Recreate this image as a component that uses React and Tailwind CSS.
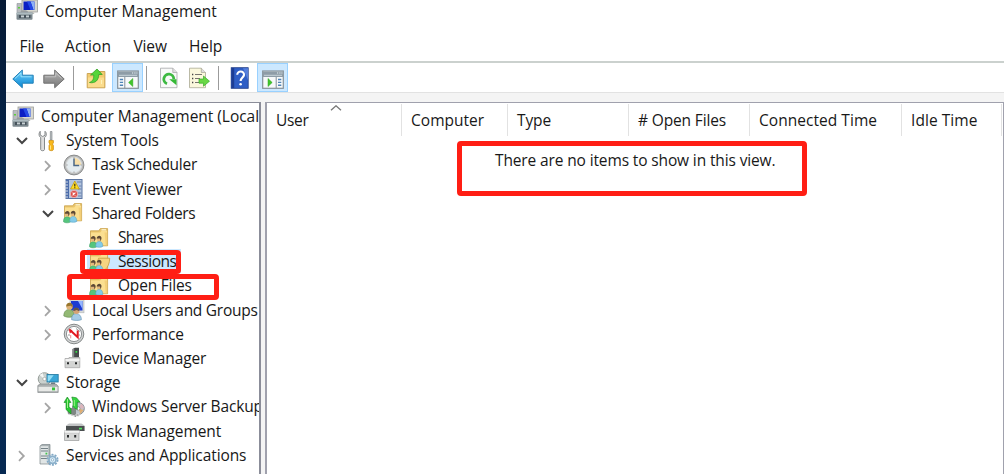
import React from "react";

const Svg = ({ children, className = "h-[22px] w-[22px]" }) => (
  <svg viewBox="0 0 22 22" className={`block shrink-0 ${className}`}>{children}</svg>
);

const ComputerIcon = () => (
  <Svg>
    <path d="M1 4.5h4.5v9H1z" fill="#b9bcc0" stroke="#8d9297" strokeWidth=".6" />
    <rect x="2" y="8" width="2" height="1.5" fill="#5bd13b" />
    <rect x="6" y="1" width="15.5" height="12" fill="#d9d9d0" stroke="#9b9c99" strokeWidth=".8" />
    <rect x="7.5" y="2.5" width="11" height="8.5" fill="#0b1fc4" />
    <path d="M14.5 2.5h4V11h-1z" fill="#8fb2f5" />
    <path d="M11 2.5h3.5L17.5 11h-3z" fill="#2448e6" />
    <path d="M12 13h5l1.5 2h-6z" fill="#b7b9b6" />
    <path d="M4.5 13c0-2.5 7.5-2.5 7.5 0v2H4.5z" fill="#969b9e" />
    <rect x=".5" y="13.5" width="16" height="7.3" rx="1" fill="#7b878d" />
    <rect x=".5" y="13.5" width="16" height="2" fill="#aebbc0" />
    <path d="M3 16h2v3H3zM8 16h2v3H8zM13 16h1.5v3H13z" fill="#46525b" />
    <path d="M5 17.3h3M10 17.3h3" stroke="#dce3e6" />
  </Svg>
);

const ToolsIcon = () => (
  <Svg>
    <path d="M3.2 1.3C1.7 3 1.5 6 3.7 7.6v12c0 1.5 3.8 1.5 3.8 0v-12C10 6 9.8 2.7 8 1.3v4L5.7 6.5 3.2 5z" fill="#dedede" stroke="#85898b" strokeWidth="1" />
    <path d="M13.3 1.5h1.7V10h-1.7z" fill="#bcc0c3" stroke="#777c80" strokeWidth=".6" />
    <path d="M12 10.5h4.4v2.5l-1 1 1 1.5v4c0 1.6-4.4 1.6-4.4 0v-4l1-1.5-1-1z" fill="#f9b91c" stroke="#c88a0c" strokeWidth=".7" />
    <path d="M13.5 15.5v4" stroke="#ffe487" />
  </Svg>
);

const ClockIcon = () => (
  <Svg>
    <circle cx="11" cy="11" r="9.9" fill="#b9bbba" stroke="#88898a" strokeWidth="1" />
    <circle cx="11" cy="11" r="7.8" fill="#e4ecf0" stroke="#d9dadb" />
    <path d="M11 11V3.8A7.2 7.2 0 0 1 18.2 11z" fill="#f8dfa8" />
    <path d="M11 4.5V11.5h5.2" fill="none" stroke="#4a6787" strokeWidth="1.5" />
    <path d="M11 3.4v1M11 17.6v1M3.5 11h1M17.6 11h1" stroke="#888" />
  </Svg>
);

const EventIcon = () => (
  <Svg>
    <rect x="3" y="1.5" width="16" height="19" fill="#b4c5de" stroke="#5b75a2" />
    <rect x="3" y="2" width="3" height="18" fill="#4b6cab" />
    <path d="M1.5 4h3.5M1.5 7h3.5M1.5 10h3.5M1.5 13h3.5M1.5 16h3.5M1.5 19h3.5" stroke="#d5dbe4" />
    <path d="M14 4h4.5M16 8h2.5M15 11h3.5M15 15h3.5M15 18h3.5" stroke="#6881ae" />
    <path d="m11.8 3 4.5 8H7.5z" fill="#ffdd21" stroke="#bf9510" strokeWidth=".7" />
    <path d="M11.8 5.8v2.7M11.8 9.2v1" stroke="#372f12" strokeWidth="1.2" />
    <circle cx="11" cy="16" r="3.7" fill="#dc504b" stroke="#f3c8c8" strokeWidth=".7" />
    <path d="m9.6 14.6 2.8 2.8m0-2.8-2.8 2.8" stroke="#fff" strokeWidth="1.1" />
  </Svg>
);

const FolderIcon = ({ open = false }) => (
  <Svg>
    <path d="M1.5 3.8h8.3l1.5-2.2h7.3v17.2H1.5z" fill="#eac66c" stroke="#c9a14d" strokeWidth=".8" />
    <path d="M2 5.5h9.2l1.5-1.8h5.4v14.5H2z" fill="#fbdf90" />
    {open
      ? <path d="M9.5 7.2h11.2c0 5-2 9.5-4.5 11.3H7z" fill="#f6d481" stroke="#c59a41" strokeWidth=".8" />
      : <path d="M15.5 5.5h2.6v12.7h-1.3z" fill="#f3cf78" />}
    <path d="M12.5 2.8h4.5" stroke="#fff8d9" strokeWidth="1.2" />
    <path d="M.5 19.8c0-3.8 1.6-5 3.6-5s3.8 1.2 3.8 5c-2 1.4-5.7 1.4-7.4 0z" fill="#55c57c" stroke="#389c61" strokeWidth=".5" />
    <path d="M6.7 19.4c0-3.8 1.6-5 3.4-5 2.1 0 3.7 1.3 3.7 5-1.8 1.2-5.2 1.2-7.1 0z" fill="#83cbe9" stroke="#4d9abf" strokeWidth=".5" />
    <circle cx="4.1" cy="12.3" r="2.3" fill="#e3b77b" />
    <circle cx="10" cy="12" r="2.3" fill="#e3b77b" />
    <path d="M1.8 11.7c.2-3.7 5.1-3.5 4.8-.2-.1 1.3-1.1 2.9-1.1 2.9l-.4-2.6zM7.7 11.4c.2-3.7 5.1-3.5 4.8-.2-.1 1.3-1.1 2.9-1.1 2.9l-.4-2.6z" fill="#5d4935" />
  </Svg>
);

const UsersIcon = () => (
  <Svg>
    <rect x="7" y=".8" width="14" height="13" fill="#d7dad9" stroke="#b1b5b6" strokeWidth=".6" />
    <rect x="8" y="2" width="11.5" height="9.5" fill="#1d3bd2" />
    <path d="M15 2h4.5v8z" fill="#93b5ff" />
    <path d="M.8 17c0-5 2.8-6.5 5.3-6.5s5.4 2 5.4 6.5c-3 1.7-7.8 1.7-10.7 0z" fill="#93b974" stroke="#658950" strokeWidth=".6" />
    <circle cx="6.5" cy="7.5" r="3.2" fill="#ddb177" />
    <path d="M3.2 7.5c0-6 7.5-4.3 6.3.7L7.7 6.7z" fill="#98762e" />
    <path d="M8.6 20.7c0-5 2.3-6 4.8-6s5 2 5 6c-2.5 1-7 1-9.8 0z" fill="#a5cbe6" stroke="#5d8fb4" strokeWidth=".6" />
    <circle cx="13.4" cy="12" r="3" fill="#d6a375" />
    <path d="M10.3 12.3c0-5.6 6.6-4.2 6 0l-2.6-1.3z" fill="#625348" />
  </Svg>
);

const PerfIcon = () => (
  <Svg>
    <circle cx="11" cy="11" r="9.8" fill="#d2d4d4" stroke="#858989" strokeWidth="1" />
    <circle cx="11" cy="11" r="7.6" fill="#fff" stroke="#8e9293" />
    <path d="M5.5 8 8 5.5M13 5.5l4 3M5 12h2M15.5 12H17" stroke="#999" />
    <path d="m7 7 7.7 7.2V7.5" fill="none" stroke="#e31920" strokeWidth="2" />
    <path d="m6 5.8 1 4.4 2.2-2.4zM7.7 12v3.3" fill="#e31920" stroke="#e31920" strokeWidth=".5" />
  </Svg>
);

const DeviceIcon = () => (
  <Svg>
    <path d="M9.5 2 12 .8h4v9.7H9.5z" fill="#45494a" />
    <path d="M9.7 2h1.5v8H9.7z" fill="#85898a" />
    <rect x="12.5" y="4" width="1.7" height="1.7" fill="#35e446" />
    <path d="M2 11.5h4v-1h10.8v10.2H2z" fill="#d3d4d3" stroke="#a0a1a0" strokeWidth=".7" />
    <path d="M2.5 12h14v2h-14z" fill="#f2f2f2" />
    <path d="M4 15.2h2v2H4zM12 15.2h2v2h-2z" fill="#27292a" />
  </Svg>
);

const StorageIcon = () => (
  <Svg>
    <circle cx="7.5" cy="7" r="6.3" fill="#cbd1ce" stroke="#979e9a" />
    <path d="m7.5 7-5-4 3-2z" fill="#f4f6f5" />
    <circle cx="7.5" cy="7" r="1.7" fill="#fff" stroke="#929794" strokeWidth=".6" />
    <rect x="10" y="2.5" width="11.2" height="7.5" fill="#39a6d6" stroke="#20759d" strokeWidth=".8" />
    <path d="M10.7 3.2h6L12 9.3h-1.3z" fill="#93ddf5" />
    <path d="M14 10.5h4v1.5h-4z" fill="#657a82" />
    <path d="M.8 13.5 3 12h16l2.2 2v6.5H.8z" fill="#aaafaf" stroke="#7d8384" strokeWidth=".6" />
    <path d="M1.5 14.8h19v4.4h-19z" fill="#e8e9e7" />
    <rect x="15" y="15.5" width="3" height="2.8" fill="#36c33b" />
  </Svg>
);

const BackupIcon = () => (
  <Svg>
    <circle cx="15.3" cy="12.5" r="6" fill="#bdc6cc" stroke="#858b91" />
    <path d="m15.3 12.5 3-5a6 6 0 0 1 2.5 5z" fill="#dcb6bd" />
    <path d="m15.3 12.5 5.2 1.5-3 4z" fill="#dfae72" />
    <circle cx="15.3" cy="12.5" r="1.7" fill="#fff" stroke="#777" strokeWidth=".6" />
    <path d="M4 12h9v9l-8-3z" fill="#7f8784" />
    <path d="M5.5 18 12 20M13 18h3v2h-3z" stroke="#ddd" fill="#777" />
    <path d="M4.3 1 1 6.5h2v7l5 4.5V13L6 10.5v-4h2z" fill="#27c833" stroke="#188620" strokeWidth=".6" />
    <path d="M8.8 1 13.5 1.8 17 6h-2.7v7.5L10 11V5.2z" fill="#35d540" stroke="#188620" strokeWidth=".6" />
    <path d="M4.5 3v9M11.3 4v6" stroke="#9bf187" />
  </Svg>
);

const DiskIcon = () => (
  <Svg>
    <path d="m3 5.5 3-2h12.5l3 2V11H3z" fill="#c2c4c5" />
    <path d="M3 6h18.5v5H3z" fill="#4b4f50" />
    <rect x="16" y="7.8" width="3" height="1.6" fill="#4ee85f" />
    <path d="M1.5 12.5H16V20.5H1.5z" fill="#d7d8d7" stroke="#999b9b" strokeWidth=".7" />
    <path d="M1.5 10.5h15v2.7h-15z" fill="#f3f4f3" stroke="#aaa" strokeWidth=".4" />
    <path d="M4 15h2v2.5H4zM11.2 15h2v2.5h-2z" fill="#292b2c" />
  </Svg>
);

const ServicesIcon = () => (
  <Svg>
    <path d="m3 2 2-1.5h8V20H3z" fill="#a9b1b3" stroke="#7d878b" strokeWidth=".7" />
    <path d="M3.5 2.2h7.8v17.3H3.5z" fill="#e0e5e5" />
    <path d="M4 4.5h7M4 7h7M4 12h7M4 14.5h7" stroke="#758288" />
    <rect x="8.5" y="8.7" width="1.8" height="1.8" fill="#3fc34a" />
    <circle cx="15.5" cy="15.8" r="5.1" fill="none" stroke="#82a9c6" strokeWidth="1.8" strokeDasharray="2 1.2" />
    <circle cx="15.5" cy="15.8" r="3.5" fill="#d9ecf7" stroke="#8cb1cb" strokeWidth="1.7" />
    <circle cx="15.5" cy="15.8" r="1.2" fill="#fff" stroke="#6796b6" strokeWidth=".6" />
  </Svg>
);

const Arrow = ({ back = false }) => (
  <Svg>
    <defs>
      <linearGradient id={back ? "backFill" : "nextFill"} x1="0" y1="0" x2="0" y2="1">
        <stop stopColor={back ? "#72d3fb" : "#b5b5b5"} />
        <stop offset="1" stopColor={back ? "#0885d3" : "#777"} />
      </linearGradient>
    </defs>
    <path
      d={back ? "M.8 12 10.3 3v5.2h10.9v8H10.3v4.6z" : "M21.2 12 11.7 3v5.2H.8v8h10.9v4.6z"}
      fill={back ? "url(#backFill)" : "url(#nextFill)"}
      stroke={back ? "#2380b7" : "#727272"}
      strokeWidth="1"
    />
    <path d={back ? "M3 11.5 9 6v3.8h10.5" : "M2.2 9.8h10.5V6l6 5.5"} fill="none" stroke={back ? "#a7e8ff" : "#c8c8c8"} strokeWidth=".8" />
  </Svg>
);

const UpIcon = () => (
  <Svg>
    <path d="M2.2 6.5h9l1.7-2h7v16.3H2.2z" fill="#f2cb70" stroke="#c69e4c" strokeWidth=".9" />
    <path d="M3 10.5h16v9.6H3z" fill="#fbdc8d" />
    <path d="M4.5 15.5c3.6-1.3 4.3-4.3 4.3-7.5H5.5L12 2l5.2 5.5h-3.5c0 5.5-3.2 9.2-9.2 8z" fill="#55d53a" stroke="#35a329" strokeWidth=".8" />
    <path d="M16.5 13v4" stroke="#fff3b9" />
  </Svg>
);

const PaneIcon = ({ right = false }) => (
  <Svg className="mt-[5px] h-[22px] w-[22px]">
    <rect x=".7" y="2" width="20.6" height="17.3" fill="#f7f9fa" stroke="#85919a" strokeWidth="1.2" />
    <path d="M1 2.5h20V8H1z" fill="#8e9ca7" />
    <path d="M2 6.3h18" stroke="#c8d4da" />
    <path d="M15 4h1.2M17.3 4h1.2M19.4 4h1" stroke="#e7f1f6" strokeWidth="1.2" />
    <path d={right ? "M14.2 8v11" : "M7.8 8v11"} stroke="#85919a" />
    <path d={right ? "M16 10.5h3.3M16 13.4h3.3M16 16.3h3.3" : "M2.8 10.5h3.3M2.8 13.4h3.3M2.8 16.3h3.3"} stroke="#4e84b7" strokeWidth="1.4" />
    <path d={right ? "m6 9.5 4.2 4-4.2 4z" : "m15.8 9.5-4.2 4 4.2 4z"} fill="#40c52c" stroke="#2fa522" strokeWidth=".5" />
  </Svg>
);

const RefreshIcon = () => (
  <Svg>
    <path d="M2.5 1.2h12.3l4.2 4.3v15.2H2.5z" fill="#f8f9f8" stroke="#a5a7a8" strokeWidth=".8" />
    <path d="M14.8 1.2v4.3H19" fill="#ddd" stroke="#a4a4a4" strokeWidth=".7" />
    <path d="M9 16.8A5 5 0 1 1 15.8 12" fill="none" stroke="#3db941" strokeWidth="2.8" />
    <path d="M11.2 12.2h7.3v6z" fill="#35b936" />
  </Svg>
);

const ExportIcon = () => (
  <Svg>
    <path d="M1.5 1.2h11.8l4.2 4.3v15.2h-16z" fill="#fbf8dc" stroke="#aaa993" strokeWidth=".8" />
    <path d="M13.3 1.2v4.3h4.2" fill="#ddd" stroke="#a4a48f" strokeWidth=".7" />
    <path d="M4 7.5h1.3M4 11.5h1.3M4 15.5h1.3" stroke="#444" strokeWidth="1.3" />
    <path d="M7 7.5h7M7 11.5h5M7 15.5h6" stroke="#77746e" strokeWidth="1.2" />
    <path d="M11 12h4.5V9l6 5.2-6 5v-3H11z" fill="#69d745" stroke="#39ad2a" strokeWidth=".7" />
  </Svg>
);

const HelpIcon = () => (
  <Svg>
    <rect x="2.2" y=".7" width="17" height="20.6" fill="#2f5ec5" stroke="#1f3c87" strokeWidth=".8" />
    <path d="M2.5 1h2.7v20H2.5z" fill="#1d3d94" />
    <path d="M14 1.2h5v12z" fill="#557fdc" />
    <path d="M8.2 7.8c.2-4.6 7.2-4.1 6.8.2-.3 2.4-3.4 2.8-3.4 6" fill="none" stroke="#fff" strokeWidth="2.1" />
    <circle cx="11.6" cy="17.3" r="1.3" fill="#fff" />
  </Svg>
);

const Chevron = ({ open }) => (
  <svg viewBox="0 0 12 12" className={`block h-3 w-3 shrink-0 ${open ? "" : "mt-[3px]"}`}>
    <path d={open ? "m1 4 5 5 5-5" : "m3 1.2 4.8 4.8L3 10.8"} fill="none" stroke={open ? "#454545" : "#a5a5a5"} strokeWidth={open ? "2" : "1.8"} />
  </svg>
);

const tree = [
  { label: "Computer Management (Local", icon: <ComputerIcon />, pad: "pl-[6px]", tracking: "tracking-[-0.03px]", root: true },
  { label: "System Tools", icon: <ToolsIcon />, pad: "pl-[10px]", tracking: "tracking-[-0.17px]", open: true },
  { label: "Task Scheduler", icon: <ClockIcon />, pad: "pl-[36px]", tracking: "tracking-[-0.27px]", open: false },
  { label: "Event Viewer", icon: <EventIcon />, pad: "pl-[36px]", tracking: "tracking-[-0.25px]", open: false },
  { label: "Shared Folders", icon: <FolderIcon />, pad: "pl-[36px]", tracking: "tracking-[-0.36px]", open: true },
  { label: "Shares", icon: <FolderIcon />, pad: "pl-[62px]", tracking: "tracking-[-0.65px]" },
  { label: "Sessions", icon: <FolderIcon open />, pad: "pl-[62px]", tracking: "tracking-[-0.45px]", mark: "left-[74px] top-[0.8px] w-[101px] h-[24px]", selected: true },
  { label: "Open Files", icon: <FolderIcon />, pad: "pl-[62px]", tracking: "tracking-[-0.2px]", mark: "left-[61px] top-[0.6px] w-[152px] h-[26px]" },
  { label: "Local Users and Groups", icon: <UsersIcon />, pad: "pl-[36px]", tracking: "tracking-[-0.27px]", open: false },
  { label: "Performance", icon: <PerfIcon />, pad: "pl-[36px]", tracking: "tracking-[-0.2px]", open: false },
  { label: "Device Manager", icon: <DeviceIcon />, pad: "pl-[36px]", tracking: "tracking-[-0.11px]" },
  { label: "Storage", icon: <StorageIcon />, pad: "pl-[10px]", tracking: "tracking-[-0.1px]", open: true },
  { label: "Windows Server Backup", icon: <BackupIcon />, pad: "pl-[36px]", tracking: "tracking-[-0.12px]", open: false },
  { label: "Disk Management", icon: <DiskIcon />, pad: "pl-[36px]", tracking: "tracking-[-0.1px]" },
  { label: "Services and Applications", icon: <ServicesIcon />, pad: "pl-[10px]", tracking: "tracking-[-0.09px]", open: false },
];

function TreeRow({ item }) {
  return (
    <div className={`relative flex h-[24.2px] shrink-0 items-center ${item.pad}`}>
      {!item.root && (
        <span className="flex w-[21px] shrink-0">{item.open !== undefined && <Chevron open={item.open} />}</span>
      )}
      <span className={`flex h-full items-center ${item.selected ? "-ml-0.5 bg-[#cce8ff] pl-0.5 pr-1" : ""}`}>
        <span className="mt-px">{item.icon}</span>
        <span className={`ml-[7px] whitespace-nowrap ${item.tracking}`}>{item.label}</span>
      </span>
      {item.mark && <span className={`absolute z-10 rounded-[4px] border-[5px] border-[#ff1e14] ${item.mark}`} />}
    </div>
  );
}

const columns = [
  { label: "User", cls: "w-[135px] pl-[9px] tracking-[-0.3px]", sorted: true },
  { label: "Computer", cls: "w-[106px] pl-[9px] tracking-[0.02px]" },
  { label: "Type", cls: "w-[121px] pl-[9px] tracking-[-0.1px]" },
  { label: "# Open Files", cls: "w-[121px] pl-[9px] tracking-[-0.14px]" },
  { label: "Connected Time", cls: "w-[152px] pl-[9px] tracking-[0.04px]" },
  { label: "Idle Time", cls: "w-[100px] pl-[9px] tracking-[0.06px]" },
];

const Separator = ({ className }) => <span className={`h-6 w-px shrink-0 bg-[#9b9b9b] ${className}`} />;
const Pressed = ({ children, className }) => (
  <span className={`flex h-[29px] w-[31px] shrink-0 items-center justify-center border border-[#99d1ff] bg-[#cce8ff] ${className}`}>{children}</span>
);

export default function App() {
  return (
    <div className="flex h-[474px] w-[1004px] overflow-hidden bg-white font-['Open_Sans','Noto_Sans',sans-serif] text-[15.5px] leading-6 text-[#181818]">
      <div className="w-[6px] shrink-0 bg-linear-to-b from-[#061a35] via-[#052a56] to-[#062952]" />
      <div className="flex min-w-0 flex-1 flex-col">
        <header className="flex h-[26px] shrink-0 items-start pl-[10px]">
          <div className="-mt-px"><ComputerIcon /></div>
          <h1 className="-mt-px ml-[7px] tracking-[-0.06px]">Computer Management</h1>
        </header>
        <nav className="flex h-[35px] shrink-0 items-start pl-[13.5px] pt-[8px]">
          <span className="w-[45.5px] tracking-[-0.05px]">File</span>
          <span className="w-[68.5px] tracking-[0.1px]">Action</span>
          <span className="w-[55.5px] tracking-[-0.15px]">View</span>
          <span className="tracking-[-0.1px]">Help</span>
        </nav>
        <div className="flex h-[32px] shrink-0 items-center border-b border-t-2 border-b-[#e2e2e2] border-t-[#cbd1ce] pl-[6px]">
          <Arrow back />
          <span className="ml-[9px]"><Arrow /></span>
          <Separator className="ml-[8px]" />
          <span className="ml-[11px]"><UpIcon /></span>
          <Pressed className="ml-[5px]"><PaneIcon /></Pressed>
          <Separator className="ml-[3px]" />
          <span className="ml-[11px]"><RefreshIcon /></span>
          <span className="ml-[8px]"><ExportIcon /></span>
          <Separator className="ml-[8px]" />
          <span className="ml-[10px]"><HelpIcon /></span>
          <Pressed className="ml-[6px]"><PaneIcon right /></Pressed>
        </div>
        <main className="flex min-h-0 flex-1 bg-[#f4f4f4] pt-[9px]">
          <aside className="flex w-[255px] shrink-0 flex-col overflow-hidden border-r-2 border-t border-[#8b8d99] bg-white pt-[1px]">
            {tree.map((item) => <TreeRow key={item.label} item={item} />)}
          </aside>
          <section className="ml-[4px] min-w-0 flex-1 border-l-2 border-r border-t border-[#a0a1ad] bg-white">
            <div className="flex h-[34px] items-start pt-[1px]">
              {columns.map((column) => (
                <div key={column.label} className={`relative h-[32px] shrink-0 border-r border-[#e2e2e2] pt-[4px] ${column.cls}`}>
                  {column.sorted && (
                    <svg viewBox="0 0 12 6" className="absolute left-[63px] top-px h-[6px] w-[12px]">
                      <path d="m1 5.3 5-4.5 5 4.5" fill="none" stroke="#777" strokeWidth="1.3" />
                    </svg>
                  )}
                  {column.label}
                </div>
              ))}
            </div>
            <div className="ml-[190px] mt-[4px] h-[55px] w-[350px] rounded-[4px] border-[5px] border-[#ff1e14] pl-[33px] pt-[2px] tracking-[-0.13px]">
              There are no items to show in this view.
            </div>
          </section>
        </main>
      </div>
    </div>
  );
}
